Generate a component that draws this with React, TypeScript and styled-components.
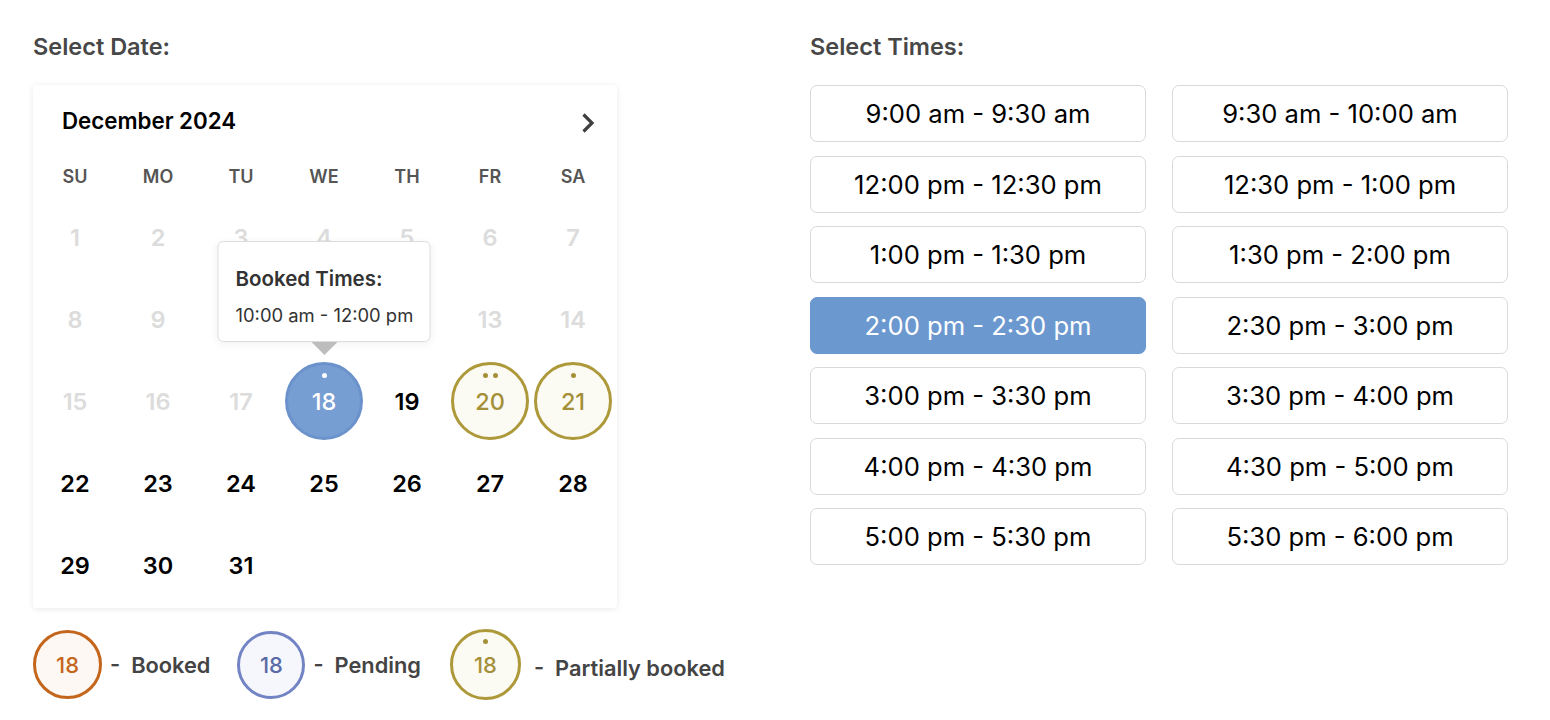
import React from "react";
import styled, { createGlobalStyle, css } from "styled-components";

const Global = createGlobalStyle`
  html, body { margin: 0; padding: 0; background: #fff; }
  body { font-family: Inter, "Noto Sans", sans-serif; color: #222; }
`;

const Page = styled.div`
  display: grid;
  grid-template-columns: 777px 1fr;
  align-items: start;
  padding: 33px 0 0 33px;
`;

const Column = styled.div`
  display: flex;
  flex-direction: column;
`;

const Title = styled.h2`
  margin: 0 0 24px;
  font-size: 23.5px;
  line-height: 28px;
  font-weight: 600;
  color: #474747;
`;

const Card = styled.div`
  width: 584px;
  background: #fff;
  border-radius: 4px;
  box-shadow: 0 1px 6px rgba(0, 0, 0, 0.09);
  padding-bottom: 2px;
`;

const CalHeader = styled.div`
  height: 71px;
  display: flex;
  align-items: center;
  justify-content: space-between;
  padding: 0 17px 0 29px;
  box-sizing: border-box;
`;

const Month = styled.div`
  font-size: 22.3px;
  font-weight: 600;
  color: #000;
`;

const NavButton = styled.button`
  border: none;
  background: none;
  padding: 0;
  width: 24px;
  height: 24px;
  display: flex;
  align-items: center;
  justify-content: center;
  cursor: pointer;
  margin-top: 4px;
`;

const Grid = styled.div`
  display: grid;
  grid-template-columns: repeat(7, 83px);
  padding-left: 0.5px;
`;

const WeekDay = styled.div`
  height: 40px;
  display: flex;
  align-items: center;
  justify-content: center;
  font-size: 18px;
  font-weight: 600;
  color: #555;
`;

const Cell = styled.div`
  position: relative;
  height: 82px;
  display: flex;
  align-items: center;
  justify-content: center;
`;

type Variant = "disabled" | "normal" | "pending" | "partial" | "booked" | "selected";

const palette: Record<string, { border: string; bg: string; color: string }> = {
  booked: { border: "#c4651c", bg: "#fdf8f3", color: "#c4651c" },
  pending: { border: "#7384c4", bg: "#f6f7fd", color: "#5a6aa6" },
  partial: { border: "#ad993a", bg: "#fbfaf3", color: "#a5903a" },
  selected: { border: "#6b92cb", bg: "#779ed3", color: "#ffffff" },
};

const Day = styled.div<{ $v: Variant; $size?: number; $fs?: number }>`
  position: relative;
  width: ${(p) => p.$size ?? 78}px;
  height: ${(p) => p.$size ?? 78}px;
  box-sizing: border-box;
  border-radius: 50%;
  display: flex;
  align-items: center;
  justify-content: center;
  font-size: ${(p) => p.$fs ?? 23.5}px;
  font-weight: 600;
  color: ${(p) => (p.$v === "disabled" ? "#dcdcdc" : "#000")};
  ${(p) =>
    palette[p.$v] &&
    css`
      border: 3px solid ${palette[p.$v].border};
      background: ${palette[p.$v].bg};
      color: ${palette[p.$v].color};
      font-weight: 500;
    `}
`;

const Dots = styled.div<{ $color: string; $top?: number }>`
  position: absolute;
  top: ${(p) => p.$top ?? 8}px;
  left: 0;
  right: 0;
  display: flex;
  justify-content: center;
  gap: 5px;
  & > span {
    width: 5px;
    height: 5px;
    border-radius: 50%;
    background: ${(p) => p.$color};
  }
`;

const Tooltip = styled.div`
  position: absolute;
  bottom: calc(100% + 18px);
  left: 50%;
  transform: translateX(-50%);
  width: 213px;
  height: 101px;
  box-sizing: border-box;
  background: #fff;
  border: 1px solid #dcdcdc;
  border-radius: 6px;
  box-shadow: 0 2px 10px rgba(0, 0, 0, 0.06);
  padding: 25px 0 0 17px;
  z-index: 2;
  &::after {
    content: "";
    position: absolute;
    top: 100%;
    left: 50%;
    transform: translateX(-50%);
    margin-top: 1px;
    border-left: 13px solid transparent;
    border-right: 13px solid transparent;
    border-top: 13px solid #bdbdbd;
  }
`;

const TipTitle = styled.div`
  font-size: 20.5px;
  font-weight: 600;
  color: #333;
  line-height: 24px;
  white-space: nowrap;
`;

const TipText = styled.div`
  font-size: 18.4px;
  color: #333;
  margin-top: 13px;
  line-height: 22px;
  white-space: nowrap;
`;

const Legend = styled.div`
  display: flex;
  align-items: center;
  margin-top: 21px;
`;

const LegendItem = styled.div<{ $shift?: number; $gap?: number; $after?: number }>`
  display: flex;
  align-items: center;
  gap: ${(p) => p.$gap ?? 8}px;
  margin-right: ${(p) => p.$after ?? 0}px;
  & > span {
    font-size: 21.8px;
    font-weight: 600;
    color: #444;
    white-space: pre;
    margin-top: ${(p) => p.$shift ?? 0}px;
  }
`;

const TimeGrid = styled.div`
  display: grid;
  grid-template-columns: repeat(2, 336px);
  grid-auto-rows: 57px;
  column-gap: 26px;
  row-gap: 13.5px;
`;

const TimeButton = styled.button<{ $selected?: boolean }>`
  font-family: Inter, "Noto Sans", sans-serif;
  font-size: 25.6px;
  font-weight: 400;
  border-radius: 7px;
  border: 1px solid ${(p) => (p.$selected ? "#6b98cf" : "#d9d9d9")};
  background: ${(p) => (p.$selected ? "#6b98cf" : "#fff")};
  color: ${(p) => (p.$selected ? "#fff" : "#000")};
  cursor: pointer;
  padding: 0;
  white-space: nowrap;
`;

type DayInfo = { n: number | null; v: Variant; dots?: number; tip?: boolean };

const days: DayInfo[] = [];
for (let i = 1; i <= 17; i++) days.push({ n: i, v: "disabled" });
days.push({ n: 18, v: "selected", dots: 1, tip: true });
days.push({ n: 19, v: "normal" });
days.push({ n: 20, v: "partial", dots: 2 });
days.push({ n: 21, v: "partial", dots: 1 });
for (let i = 22; i <= 31; i++) days.push({ n: i, v: "normal" });

const times = [
  "9:00 am - 9:30 am",
  "9:30 am - 10:00 am",
  "12:00 pm - 12:30 pm",
  "12:30 pm - 1:00 pm",
  "1:00 pm - 1:30 pm",
  "1:30 pm - 2:00 pm",
  "2:00 pm - 2:30 pm",
  "2:30 pm - 3:00 pm",
  "3:00 pm - 3:30 pm",
  "3:30 pm - 4:00 pm",
  "4:00 pm - 4:30 pm",
  "4:30 pm - 5:00 pm",
  "5:00 pm - 5:30 pm",
  "5:30 pm - 6:00 pm",
];

const weekdays = ["SU", "MO", "TU", "WE", "TH", "FR", "SA"];

function renderDots(count: number, color: string, top?: number) {
  return (
    <Dots $color={color} $top={top}>
      {Array.from({ length: count }).map((_, i) => (
        <span key={i} />
      ))}
    </Dots>
  );
}

export default function App() {
  return (
    <>
      <Global />
      <Page>
        <Column>
          <Title>Select Date:</Title>
          <Card>
            <CalHeader>
              <Month>December 2024</Month>
              <NavButton aria-label="Next month">
                <svg width="14" height="22" viewBox="0 0 14 22">
                  <path d="M2.5 2.5 L11 11 L2.5 19.5" fill="none" stroke="#3f3f3f" strokeWidth="3.2" strokeLinecap="butt" />
                </svg>
              </NavButton>
            </CalHeader>
            <Grid>
              {weekdays.map((w) => (
                <WeekDay key={w}>{w}</WeekDay>
              ))}
              {days.map((d, i) => (
                <Cell key={i}>
                  <Day $v={d.v}>
                    {d.dots ? renderDots(d.dots, palette[d.v].color) : null}
                    {d.n}
                  </Day>
                  {d.tip && (
                    <Tooltip>
                      <TipTitle>Booked Times:</TipTitle>
                      <TipText>10:00 am - 12:00 pm</TipText>
                    </Tooltip>
                  )}
                </Cell>
              ))}
            </Grid>
          </Card>
          <Legend>
            <LegendItem $after={27}>
              <Day $v="booked" $size={69} $fs={22}>18</Day>
              <span>-  Booked</span>
            </LegendItem>
            <LegendItem $after={29}>
              <Day $v="pending" $size={68} $fs={22}>18</Day>
              <span>-  Pending</span>
            </LegendItem>
            <LegendItem $shift={6} $gap={13}>
              <Day $v="partial" $size={71} $fs={22}>
                {renderDots(1, palette.partial.color, 7)}
                18
              </Day>
              <span>-  Partially booked</span>
            </LegendItem>
          </Legend>
        </Column>
        <Column>
          <Title>Select Times:</Title>
          <TimeGrid>
            {times.map((t) => (
              <TimeButton key={t} $selected={t === "2:00 pm - 2:30 pm"}>
                {t}
              </TimeButton>
            ))}
          </TimeGrid>
        </Column>
      </Page>
    </>
  );
}
